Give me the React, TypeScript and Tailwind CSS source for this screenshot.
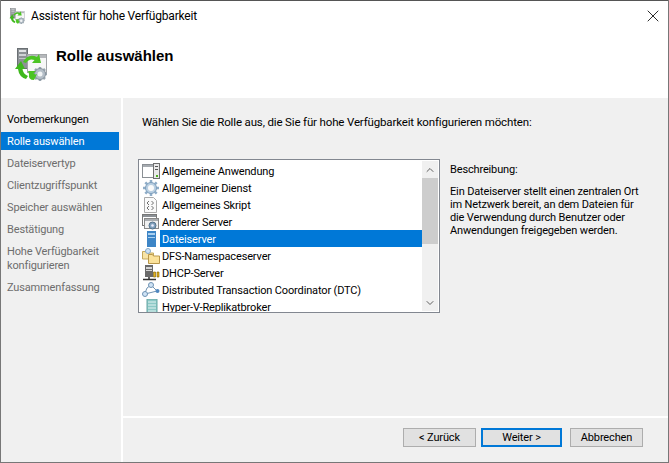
import { ChevronDown, ChevronUp, X } from 'lucide-react';

const steps = [
  { label: 'Vorbemerkungen', state: 'done' },
  { label: 'Rolle auswählen', state: 'active' },
  { label: 'Dateiservertyp', state: 'todo' },
  { label: 'Clientzugriffspunkt', state: 'todo' },
  { label: 'Speicher auswählen', state: 'todo' },
  { label: 'Bestätigung', state: 'todo' },
  { label: 'Hohe Verfügbarkeit konfigurieren', state: 'todo' },
  { label: 'Zusammenfassung', state: 'todo' },
];

function WizardIcon({ size }: { size: number }) {
  return (
    <svg width={size} height={size} viewBox="0 0 34 34" className="shrink-0">
      {/* server tower */}
      <rect x="3.5" y="1.5" width="10" height="20" fill="#8d9296" stroke="#6a6f73" />
      <rect x="5" y="3" width="7" height="2" fill="#e2e4e6" />
      <rect x="5" y="7" width="7" height="2" fill="#d0d3d6" />
      <rect x="5" y="11" width="7" height="1" fill="#c2c5c8" />
      {/* window */}
      <rect x="13.5" y="7.5" width="19" height="18" fill="#f7f7f7" stroke="#a2a5a8" />
      <rect x="14" y="8" width="18" height="3" fill="#b5b8bb" />
      {/* gear */}
      <path d="M26 20v14M19 27h14M21 22l10 10M31 22L21 32" stroke="#97a3ad" strokeWidth="2.5" />
      <circle cx="26" cy="27" r="5.5" fill="#b4bec7" stroke="#87939d" />
      <circle cx="26" cy="27" r="2.5" fill="#f2f4f5" />
      {/* green arrows */}
      <path d="M9 15 Q14 6 23 10 L25 7 L27 16 L18 16 L20.5 13 Q15 11 12 16 Z" fill="#4cc423" />
      <path d="M1 22 L7 14 L11 22 L8.5 22 Q9 27 14 29 L12 32 Q5 30 4 22 Z" fill="#3fb81d" />
      <path d="M14 24 L22 24 L19.5 26.5 Q21 28 23 27 L20 33 Q14 33 15 27 Z" fill="#4cc423" />
    </svg>
  );
}

function ClusterIcon({ kind }: { kind: string }) {
  if (kind === 'app') {
    return (
      <svg width="18" height="16" viewBox="0 0 18 16">
        <rect x="0.5" y="1.5" width="12" height="13" fill="#fff" stroke="#8a8f94" />
        <rect x="1" y="2" width="11" height="2" fill="#a6abb0" />
        <rect x="11.5" y="0.5" width="6" height="15" fill="#e9e9e9" stroke="#6f6f6f" />
        <rect x="13" y="3" width="3" height="1" fill="#555" />
        <rect x="13" y="6" width="3" height="1" fill="#555" />
        <rect x="14" y="12" width="2" height="2" fill="#4caf1e" />
      </svg>
    );
  }
  if (kind === 'gear') {
    return (
      <svg width="18" height="16" viewBox="0 0 18 16">
        <path d="M9 0v16M1 8h16M3.3 2.3l11.4 11.4M14.7 2.3L3.3 13.7" stroke="#8fadc8" strokeWidth="2.5" />
        <circle cx="9" cy="8" r="5.5" fill="#b9cfe2" stroke="#7f9fbc" />
        <circle cx="9" cy="8" r="3" fill="#fafafa" />
      </svg>
    );
  }
  if (kind === 'script') {
    return (
      <svg width="18" height="16" viewBox="0 0 18 16">
        <path d="M2.5 0.5h9l3 3v12h-12z" fill="#fafafa" stroke="#aaa" />
        <path d="M7 4L5 6 7 8M9.5 4l2 2-2 2M7 9l-2 2 2 2M9.5 9l2 2-2 2" fill="none" stroke="#707070" />
      </svg>
    );
  }
  if (kind === 'server') {
    return (
      <svg width="18" height="16" viewBox="0 0 18 16">
        <rect x="0.5" y="0.5" width="14" height="11" fill="#fff" stroke="#777" />
        <rect x="1" y="1" width="13" height="2" fill="#8b9095" />
        <rect x="2.5" y="4.5" width="14" height="10" fill="#f1f1f1" stroke="#888" />
        <rect x="3" y="5" width="13" height="2" fill="#a9adb1" />
        <circle cx="10.5" cy="11.5" r="3.5" fill="#7fa0bd" stroke="#54718a" />
        <circle cx="10.5" cy="11.5" r="1.3" fill="#eef" />
      </svg>
    );
  }
  if (kind === 'file') {
    return (
      <svg width="18" height="16" viewBox="0 0 18 16">
        <rect x="5" y="0" width="9" height="16" fill="#3d85c6" />
        <rect x="6" y="2" width="7" height="2" fill="#a9d0f0" />
        <rect x="6" y="6" width="7" height="1" fill="#a9d0f0" />
      </svg>
    );
  }
  if (kind === 'dfs') {
    return (
      <svg width="18" height="16" viewBox="0 0 18 16">
        <path d="M0.5 3.5h5l1 1.5h5v6h-11z" fill="#f8e4a6" stroke="#c4a85a" />
        <circle cx="6" cy="3" r="2.5" fill="#cfe3f5" stroke="#86a8c6" />
        <path d="M6.5 6.5h4l1 1.5h6v7.5h-11z" fill="#fbe29a" stroke="#b9974a" />
      </svg>
    );
  }
  if (kind === 'dhcp') {
    return (
      <svg width="18" height="16" viewBox="0 0 18 16">
        <rect x="3" y="0" width="8" height="12" fill="#6a6a6a" />
        <rect x="4" y="2" width="6" height="2" fill="#d5d5d5" />
        <rect x="4" y="5" width="6" height="1" fill="#d5d5d5" />
        <path d="M1 14.5h13M7 12v2" stroke="#333" strokeWidth="1.5" />
        <path d="M11.5 7h2v5h-2zM15 7h2v5h-2z" fill="#e3b21c" stroke="#7a5c00" strokeWidth="0.6" />
      </svg>
    );
  }
  if (kind === 'dtc') {
    return (
      <svg width="18" height="16" viewBox="0 0 18 16">
        <path d="M3 11Q4 5 9 3M3 12L15 9M9 3L15 9" fill="none" stroke="#6f93b3" />
        <circle cx="9" cy="3" r="2.5" fill="#cfe3f5" stroke="#6f93b3" />
        <circle cx="3" cy="12" r="2.5" fill="#cfe3f5" stroke="#6f93b3" />
        <circle cx="15.5" cy="9" r="2" fill="#4f87bf" />
      </svg>
    );
  }
  return (
    <svg width="18" height="16" viewBox="0 0 18 16">
      <rect x="5" y="0" width="10" height="16" fill="#8cc9c6" stroke="#67a6a3" />
      <path d="M6 3h8M6 6h8M6 9h8M6 12h8" stroke="#e3f3f2" />
    </svg>
  );
}

const roles = [
  { label: 'Allgemeine Anwendung', kind: 'app' },
  { label: 'Allgemeiner Dienst', kind: 'gear' },
  { label: 'Allgemeines Skript', kind: 'script' },
  { label: 'Anderer Server', kind: 'server' },
  { label: 'Dateiserver', kind: 'file', selected: true },
  { label: 'DFS-Namespaceserver', kind: 'dfs' },
  { label: 'DHCP-Server', kind: 'dhcp' },
  { label: 'Distributed Transaction Coordinator (DTC)', kind: 'dtc' },
  { label: 'Hyper-V-Replikatbroker', kind: 'hyperv' },
];

function WizardButton({ label, primary }: { label: string; primary?: boolean }) {
  return (
    <button
      className={`h-[19px] flex items-center justify-center bg-[#e1e1e1] text-black text-[11px] ${
        primary ? 'w-[81px] border-2 border-[#0078d7]' : 'w-[73px] border border-[#adadad]'
      }`}
    >
      {label}
    </button>
  );
}

export default function App() {
  return (
    <div
      className="w-[669px] h-[463px] bg-white flex flex-col border-x border-b border-[#777] text-[11px] leading-[14px] tracking-[-0.15px] text-black overflow-hidden"
      style={{ fontFamily: 'Roboto, sans-serif' }}
    >
      {/* Title bar */}
      <div className="h-[31px] flex items-center pl-[8px] pr-[5px] shrink-0 border-t border-[#555]">
        <WizardIcon size={16} />
        <span className="ml-[6px] text-[12px] tracking-[-0.2px]">Assistent für hohe Verfügbarkeit</span>
        <X className="ml-auto w-[20px] h-[20px] text-black" strokeWidth={1} />
      </div>

      {/* Header */}
      <div className="h-[67px] flex items-start pl-[13px] shrink-0 pt-[16px]">
        <WizardIcon size={34} />
        <h1 className="ml-[8px] font-bold text-[15px] leading-[18px] tracking-normal" style={{ fontFamily: '"Liberation Sans", sans-serif' }}>
          Rolle auswählen
        </h1>
      </div>

      {/* Body */}
      <div className="flex-1 flex gap-[2px] min-h-0">
        <nav className="w-[120px] bg-[#f0f0f0] pt-[12px] shrink-0">
          {steps.map((step) => (
            <div
              key={step.label}
              className={`pl-[6px] pr-[2px] pt-[3px] pb-[1px] mb-[4px] ${
                step.state === 'active' ? 'mr-[2px] bg-[#0078d7] text-white' : step.state === 'done' ? 'text-black' : 'text-[#6d6d6d]'
              }`}
            >
              {step.label}
            </div>
          ))}
        </nav>

        <div className="flex-1 flex flex-col min-w-0">
          <main className="h-[318px] bg-[#f0f0f0] pl-[19px] pt-[17px] shrink-0">
            <p className="text-[11.5px]">Wählen Sie die Rolle aus, die Sie für hohe Verfügbarkeit konfigurieren möchten:</p>
            <div className="flex mt-[30px]">
              <div className="w-[302px] h-[154px] ml-[-4px] bg-white border border-[#828790] flex overflow-hidden shrink-0">
                <ul className="flex-1 min-w-0 pt-[2px]">
                  {roles.map((role) => (
                    <li key={role.label} className="h-[17px] flex items-center pl-[3px] whitespace-nowrap">
                      <ClusterIcon kind={role.kind} />
                      <span className={`pl-[2px] pt-[2px] flex-1 h-[17px] flex items-center ${role.selected ? 'bg-[#0078d7] text-white' : ''}`}>
                        {role.label}
                      </span>
                    </li>
                  ))}
                </ul>
                <div className="w-[16px] mr-[1px] my-[1px] bg-[#f0f0f0] flex flex-col items-center shrink-0">
                  <div className="h-[17px] flex items-center justify-center">
                    <ChevronUp className="w-[12px] h-[12px] text-[#606060]" strokeWidth={2} />
                  </div>
                  <div className="w-full h-[66px] bg-[#cdcdcd]" />
                  <div className="mt-auto h-[17px] flex items-center justify-center">
                    <ChevronDown className="w-[12px] h-[12px] text-[#606060]" strokeWidth={2} />
                  </div>
                </div>
              </div>
              <div className="ml-[10px] w-[190px] pt-[4px]">
                <p>Beschreibung:</p>
                <p className="mt-[8px] leading-[13px]">
                  Ein Dateiserver stellt einen zentralen Ort im Netzwerk bereit, an dem Dateien für die Verwendung durch Benutzer oder Anwendungen freigegeben werden.
                </p>
              </div>
            </div>
          </main>
          <footer className="mt-[2px] flex-1 bg-[#f0f0f0] flex items-start justify-end pt-[10px] pr-[25px]">
            <div className="flex items-center">
              <WizardButton label="< Zurück" />
              <div className="ml-[5px]">
                <WizardButton label="Weiter >" primary />
              </div>
              <div className="ml-[8px]">
                <WizardButton label="Abbrechen" />
              </div>
            </div>
          </footer>
        </div>
      </div>
    </div>
  );
}
